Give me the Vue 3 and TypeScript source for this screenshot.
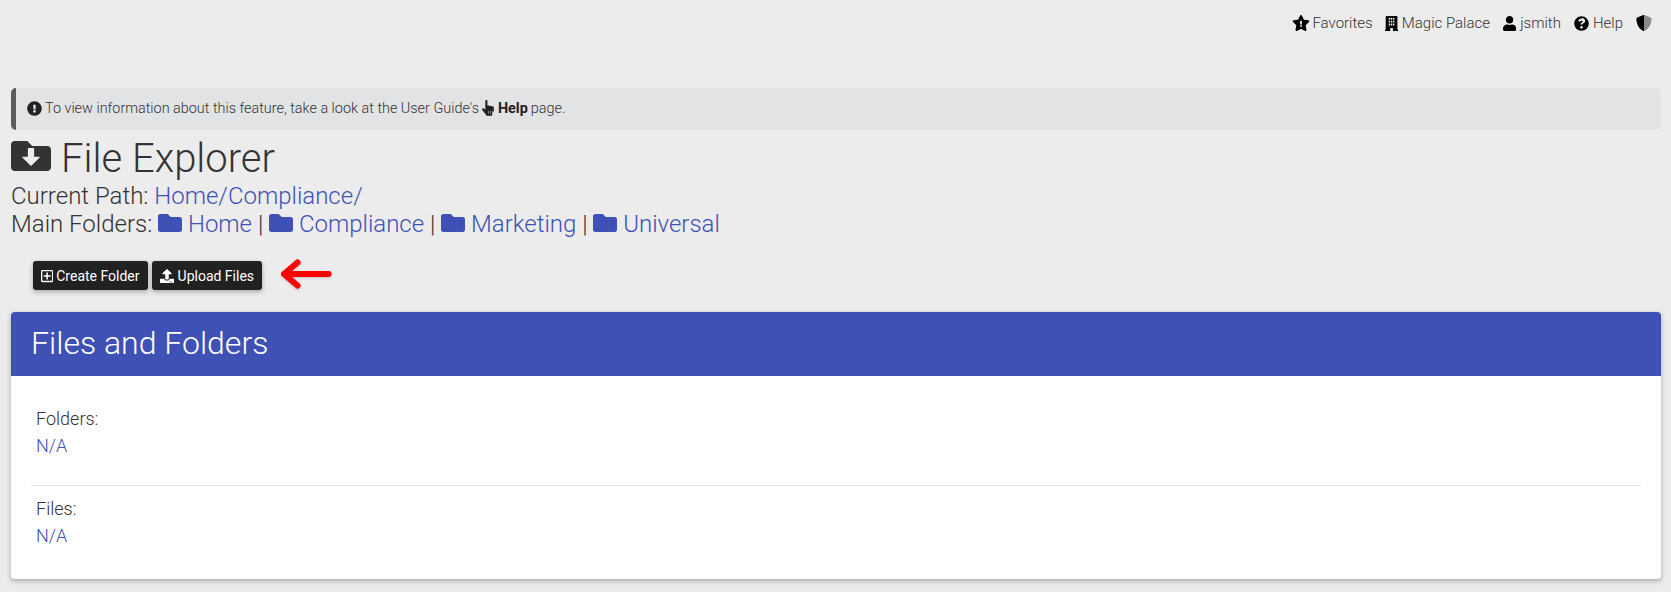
<script setup lang="ts">
const folders = ['Home', 'Compliance', 'Marketing', 'Universal']
const folderPath = 'M464 128H272l-64-64H48C21.49 64 0 85.49 0 112v288c0 26.51 21.49 48 48 48h416c26.51 0 48-21.49 48-48V176c0-26.51-21.49-48-48-48z'
</script>

<template>
  <div class="page">
    <nav class="topnav">
      <span class="nav-item star-item">
        <svg class="ico star" viewBox="0 0 576 512"><path fill-rule="evenodd" d="M316.9 18C311.6 7 300.4 0 288.1 0s-23.4 7-28.8 18L195 150.3 51.4 171.5c-12 1.8-22 10.2-25.7 21.7s-.7 24.2 7.9 32.7L137.8 329 113.2 474.7c-2 12 3 24.2 12.9 31.3s23 8 33.8 2.3l128.3-68.5 128.3 68.5c10.8 5.7 23.9 4.9 33.8-2.3s14.9-19.3 12.9-31.3L438.5 329 542.7 225.9c8.6-8.5 11.7-21.2 7.9-32.7s-13.7-19.9-25.7-21.7L381.2 150.3 316.9 18zM260 180h56v120h-56zM260 325h56v50h-56z"/></svg>
        Favorites
      </span>
      <span class="nav-item">
        <svg class="ico" viewBox="0 0 448 512"><path fill-rule="evenodd" d="M48 0h352c13 0 24 11 24 24v440h12c7 0 12 5 12 12v36H272v-80c0-13-11-24-24-24h-48c-13 0-24 11-24 24v80H0v-36c0-7 5-12 12-12h12V24C24 11 35 0 48 0zM128 64h48v64h-48zM272 64h48v64h-48zM200 64h48v64h-48zM128 160h48v64h-48zM200 160h48v64h-48zM272 160h48v64h-48zM128 256h48v64h-48zM200 256h48v64h-48zM272 256h48v64h-48z"/></svg>
        Magic Palace
      </span>
      <span class="nav-item">
        <svg class="ico" viewBox="0 0 448 512"><path d="M224 256c70.700 0 128-57.300 128-128S294.700 0 224 0 96 57.300 96 128s57.300 128 128 128zm89.600 32h-16.700c-22.200 10.200-46.900 16-72.900 16s-50.600-5.800-72.900-16h-16.700C60.200 288 0 348.200 0 422.400V464c0 26.500 21.500 48 48 48h352c26.500 0 48-21.500 48-48v-41.600c0-74.200-60.200-134.400-134.400-134.400z"/></svg>
        jsmith
      </span>
      <span class="nav-item">
        <svg class="ico" viewBox="0 0 512 512"><path d="M504 256c0 137-111 248-248 248S8 393 8 256C8 119.100 119 8 256 8s248 111.100 248 248zM262.700 90c-54.500 0-89.300 23-116.500 63.800-3.500 5.300-2.400 12.400 2.700 16.300l34.700 26.300c5.200 3.900 12.600 3 16.700-2.100 17.900-22.700 30.100-35.800 57.300-35.800 20.400 0 45.700 13.100 45.700 33 0 15-12.400 22.700-32.600 34-23.600 13.200-54.800 29.700-54.800 70.900V280c0 6.600 5.400 12 12 12h56c6.600 0 12-5.400 12-12v-1.300c0-28.600 83.500-29.800 83.500-107.200 0-58.300-60.500-102.500-117.200-102.500zM256 339c-25.500 0-46.200 20.700-46.200 46.200 0 25.500 20.700 46.200 46.200 46.200s46.200-20.700 46.200-46.200c0-25.500-20.700-46.200-46.200-46.200z"/></svg>
        Help
      </span>
      <svg class="ico shield" viewBox="0 0 512 512">
        <path fill="#8a8a8a" d="M466.500 83.700l-192-80a48.150 48.150 0 0 0-36.900 0l-192 80C27.700 91.100 16 108.600 16 128c0 198.500 114.500 335.700 221.500 380.300 11.800 4.900 25.100 4.900 36.900 0C360.100 472.600 496 349.300 496 128c0-19.400-11.700-36.900-29.500-44.300z"/>
        <path fill="#000" d="M256 0c-6.200 0-12.500 1.200-18.400 3.700l-192 80C27.700 91.100 16 108.600 16 128c0 198.500 114.500 335.700 221.500 380.300 5.900 2.500 12.200 3.700 18.500 3.700V0z"/>
      </svg>
    </nav>

    <main class="content">
      <div class="alert">
        <svg class="alert-ico" viewBox="0 0 512 512"><path d="M504 256c0 137-111 248-248 248S8 393 8 256 119 8 256 8s248 111 248 248zm-248 50c-25.400 0-46 20.600-46 46s20.600 46 46 46 46-20.600 46-46-20.600-46-46-46zm-43.700-165.300l7.400 136c.3 6.400 5.600 11.300 12 11.300h48.500c6.400 0 11.600-5 12-11.300l7.400-136c.4-6.900-5.100-12.700-12-12.700h-63.400c-6.900 0-12.400 5.800-12 12.700z"/></svg>
        <span>To view information about this feature, take a look at the User Guide's</span>
        <svg class="hand" viewBox="0 0 448 512"><path fill-rule="evenodd" d="M105.600 34c0-19 15-34 34-34s34 15 34 34v146c10-9 24-11 37-8 13 3 24 12 29 24 12-12 30-15 45-9 10 4 18 11 22 21 14-10 33-11 48-2 15 8 24 23 24 40v72c0 22-5 44-16 64l-32 60c-4 7-6 15-6 23v17c0 10-8 18-18 18H148c-9 0-17-6-19-15-3-18-12-34-26-46L12 331c-15-14-16-36-4-52 14-16 38-18 54-5l44 35V34zM200 340v100h16V340zM260 340v100h16V340zM320 340v100h16V340z"/></svg>
        <strong>Help</strong>
        <span>page.</span>
      </div>

      <h1 class="title">
        <svg class="title-ico" viewBox="0 0 512 512"><path fill="#333" fill-rule="evenodd" d="M464 128H272l-64-64H48C21.490 64 0 85.490 0 112v288c0 26.510 21.490 48 48 48h416c26.510 0 48-21.490 48-48V176c0-26.510-21.490-48-48-48zM256 384L148 278c-6-6-2-14 6-14h62v-98c0-6 5-12 12-12h56c7 0 12 6 12 12v98h62c8 0 12 8 6 14z"/></svg>
        <span>File Explorer</span>
      </h1>

      <div class="paths">
        <div>Current Path: <a class="link">Home/Compliance/</a></div>
        <div>
          Main Folders:
          <template v-for="(f, i) in folders" :key="f">
            <a class="link"><svg class="folder" viewBox="0 0 512 512"><path :d="folderPath"/></svg> {{ f }}</a>
            <span v-if="i < folders.length - 1"> | </span>
          </template>
        </div>
      </div>

      <div class="actions">
        <button class="btn" type="button">
          <svg class="btn-ico" viewBox="0 0 448 512"><path d="M352 240v32c0 6.600-5.400 12-12 12h-88v88c0 6.600-5.400 12-12 12h-32c-6.600 0-12-5.400-12-12v-88h-88c-6.600 0-12-5.400-12-12v-32c0-6.600 5.400-12 12-12h88v-88c0-6.600 5.400-12 12-12h32c6.600 0 12 5.400 12 12v88h88c6.600 0 12 5.400 12 12zm96-160v352c0 26.500-21.500 48-48 48H48c-26.500 0-48-21.500-48-48V80c0-26.500 21.500-48 48-48h352c26.500 0 48 21.500 48 48zm-48 346V86c0-3.300-2.700-6-6-6H54c-3.300 0-6 2.700-6 6v340c0 3.300 2.700 6 6 6h340c3.300 0 6-2.700 6-6z"/></svg>
          Create Folder
        </button>
        <button class="btn upload" type="button">
          <svg class="btn-ico" viewBox="0 0 512 512"><path d="M296 384h-80c-13.300 0-24-10.700-24-24V192h-87.700c-17.800 0-26.700-21.500-14.100-34.100L242.300 5.700c7.500-7.500 19.800-7.500 27.300 0l152.200 152.200c12.600 12.600 3.700 34.100-14.100 34.100H320v168c0 13.300-10.700 24-24 24zm216-8v112c0 13.300-10.700 24-24 24H24c-13.300 0-24-10.700-24-24V376c0-13.300 10.700-24 24-24h136v8c0 30.900 25.100 56 56 56h80c30.900 0 56-25.100 56-56v-8h136c13.300 0 24 10.700 24 24zm-124 88c0-11-9-20-20-20s-20 9-20 20 9 20 20 20 20-9 20-20zm64 0c0-11-9-20-20-20s-20 9-20 20 9 20 20 20 20-9 20-20z"/></svg>
          Upload Files
        </button>
        <svg class="arrow" viewBox="0 0 52 30"><path d="M48.500 15H6M17.500 3.500 4 15l13.500 11.500" fill="none" stroke="#f00" stroke-width="6" stroke-linecap="round" stroke-linejoin="round"/></svg>
      </div>

      <section class="card">
        <header class="card-head">Files and Folders</header>
        <div class="card-body">
          <div class="group">
            <div class="label">Folders:</div>
            <a class="link value">N/A</a>
          </div>
          <hr class="rule" />
          <div class="group">
            <div class="label">Files:</div>
            <a class="link value">N/A</a>
          </div>
        </div>
      </section>
    </main>
  </div>
</template>

<style>
html, body { margin: 0; background: #ececec; }
</style>

<style scoped>
.page {
  height: 592px;
  overflow: hidden;
  background: #ececec;
  color: #333;
  font-family: Roboto, "Liberation Sans", sans-serif;
  font-weight: 300;
}
.topnav {
  display: flex;
  justify-content: flex-end;
  align-items: center;
  height: 46px;
  padding-right: 19px;
  gap: 13px;
  font-size: 15px;
}
.nav-item { display: inline-flex; align-items: center; gap: 4px; }
.star-item { gap: 2px; margin-right: -1px; }
.ico { height: 15px; width: auto; display: block; fill: #000; }
.star { height: 16px; }
.shield { height: 16px; }
.content { padding: 42px 10px 0 11px; }
.alert {
  box-sizing: border-box;
  height: 42px;
  display: flex;
  align-items: center;
  gap: 3px;
  padding: 0 0 2px 11px;
  background: #e2e3e5;
  border-left: 5px solid #5c5c5c;
  border-radius: 5px;
  font-size: 14.4px;
}
.alert strong { font-weight: 700; color: #222; }
.alert-ico { height: 15px; width: auto; fill: #222; flex: none; }
.hand { height: 16px; width: auto; fill: #222; flex: none; margin-right: -1px; }
.title {
  display: flex;
  align-items: center;
  gap: 10px;
  margin: 5px 0 0;
  height: 48px;
  font-size: 40px;
  font-weight: 300;
  line-height: 48px;
}
.title-ico { width: 40px; height: 40px; flex: none; margin-bottom: 6px; }
.paths { font-size: 24px; line-height: 28px; margin-top: -1px; }
.link { color: #3f51b5; }
.folder { height: 24px; width: 24px; fill: #3f51b5; vertical-align: -3px; }
.actions {
  display: flex;
  align-items: center;
  gap: 4px;
  margin: 23px 0 0 22px;
  height: 29px;
}
.btn {
  display: inline-flex;
  align-items: center;
  gap: 3px;
  height: 29px;
  padding: 0 8px;
  border: 0;
  border-radius: 3px;
  background: #212121;
  color: #fff;
  font: 400 14px Roboto, "Liberation Sans", sans-serif;
  box-shadow: 0 2px 5px rgba(0, 0, 0, .3);
}
.upload { gap: 4px; }
.btn-ico { height: 14px; width: auto; fill: #fff; flex: none; }
.arrow { width: 52px; height: 30px; margin: 0 0 3px 14px; filter: drop-shadow(0 1px 1px rgba(0, 0, 0, .2)); }
.card {
  margin-top: 22px;
  background: #fff;
  border-radius: 4px;
  overflow: hidden;
  box-shadow: 0 2px 5px rgba(0, 0, 0, .3);
}
.card-head {
  height: 64px;
  line-height: 62px;
  padding-left: 20px;
  background: #3f51b5;
  color: #fff;
  font-size: 32px;
  font-weight: 300;
}
.card-body { padding: 28px 20px; height: 203px; box-sizing: border-box; }
.group { padding: 2px 0 0 5px; font-size: 18px; line-height: 28px; }
.label { color: #333; line-height: 26px; }
.value { display: block; }
.rule { border: 0; border-top: 1px solid #e0e0e0; margin: 25px 0 8px; }
</style>
